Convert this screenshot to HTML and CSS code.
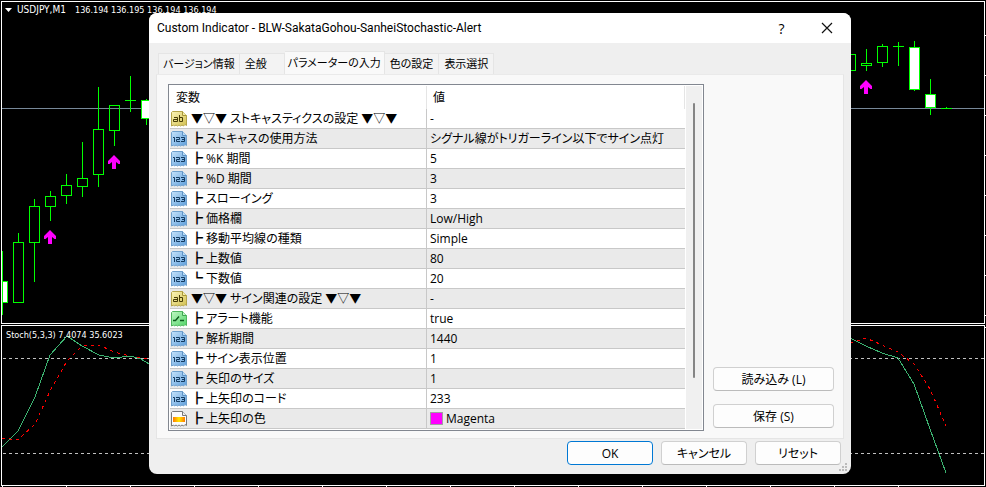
FILE: index.html
```html
<!DOCTYPE html>
<html lang="ja">
<head>
  <meta charset="UTF-8">
  <meta name="viewport" content="width=device-width, initial-scale=1.0">

  <title>Custom Indicator</title>

  <link rel="stylesheet" href="styles.css">
</head>
<body>

<!-- icons -->
<svg class="defs" width="0" height="0" aria-hidden="true">
  <defs>
    <linearGradient id="blue" x1="0" y1="0" x2="1" y2="1">
      <stop offset="0" stop-color="#c4e2fa"/>
      <stop offset="1" stop-color="#5f9fdc"/>
    </linearGradient>
    <linearGradient id="yellow" x1="0" y1="0" x2="1" y2="1">
      <stop offset="0" stop-color="#fbf5b8"/>
      <stop offset="1" stop-color="#d2bf50"/>
    </linearGradient>
    <linearGradient id="green" x1="0" y1="0" x2="1" y2="1">
      <stop offset="0" stop-color="#c0f8c4"/>
      <stop offset="1" stop-color="#52d468"/>
    </linearGradient>
    <linearGradient id="orange">
      <stop offset="0" stop-color="#ff7800"/>
      <stop offset=".5" stop-color="#ffe800"/>
      <stop offset="1" stop-color="#ff7800"/>
    </linearGradient>
    <path id="sheet" d="M1.5 .5H11.5L15.5 4.5V14.5L14 13.5L12.5 15L11 14L9.5 15L8 14L6.5 15L5 14L3.5 15L2.5 14L.5 15V1.5Z"/>
    <symbol id="icon-int" viewBox="0 0 16 16">
      <use href="#sheet" fill="url(#blue)" stroke="#6fa0cd"/>
      <path d="M11.5 .5V4.5H15.5" fill="#b9dcf8" stroke="#5f93c4"/>
      <path d="M2 6.5H3.5V11M5 6.500H8.500V8.500H5.500V10.500H9M10 6.500H13.500V10.500H10M11 8.500H13.500" fill="none" stroke="#123a60"/>
    </symbol>
    <symbol id="icon-str" viewBox="0 0 16 16">
      <use href="#sheet" fill="url(#yellow)" stroke="#b5a548"/>
      <path d="M11.5 .5V4.5H15.5" fill="#f5edaa" stroke="#a8973a"/>
      <path d="M3 6.500H6.500V10.500H2.500V8.500H6M8.500 4V10.500H11.500V6.500H9" fill="none" stroke="#453b06"/>
    </symbol>
    <symbol id="icon-bool" viewBox="0 0 16 16">
      <use href="#sheet" fill="url(#green)" stroke="#4fb65e"/>
      <path d="M11.5 .5V4.5H15.5" fill="#c2f7c8" stroke="#3fa650"/>
      <path d="M2 9.500H4.500L8 5.500M9 9.500H13" fill="none" stroke="#0c5a1c" stroke-width="1.400"/>
    </symbol>
    <symbol id="icon-color" viewBox="0 0 16 16">
      <use href="#sheet" fill="#fbfbfb" stroke="#777"/>
      <path d="M11.5 .5V4.5H15.5" fill="#eee" stroke="#777"/>
      <path d="M2 6H14V11H2Z" fill="url(#orange)"/>
    </symbol>
    <path id="arrow" d="M6 0L12 6V9H10.500L8 7V14H4V7L1.500 9H0V6Z"/>
  </defs>
</svg>

<main class="terminal">

  <svg class="chart" viewBox="0 0 986 487" role="img" aria-label="USDJPY,M1">
    <!-- frames -->
    <g class="frame">
      <path d="M1.5 323V1.500H984.500V323.500H1"/>
      <path d="M1.500 485V325.500H984.500V485.500H1"/>
      <path d="M984 35.500H986M984 75.500H986M984 115.500H986M984 155.500H986M984 195.500H986M984 235.500H986M984 275.500H986M984 315.500H986M984 327.500H986"/>
      <path d="M2.500 485V487M66.500 485V487M130.500 485V487M194.500 485V487M258.500 485V487M322.500 485V487M386.500 485V487M450.500 485V487M514.500 485V487M578.500 485V487M642.500 485V487M706.500 485V487M770.500 485V487M834.500 485V487M898.500 485V487"/>
    </g>
    <path class="price-line" d="M2 108.500H984"/>

    <!-- candles -->
    <g class="candle">
      <path d="M2.500 251V315M18.500 233V242M34.500 199V206M34.500 242V282M50.500 191V196M50.500 206V221M66.500 174V185M66.500 195V204M82.500 142V178M82.500 186V197M98.500 87V129M98.500 174V187M114.500 130V146M130.500 76V112M125 100.500H136M146.500 99V125"/>
      <path d="M13.500 242.500H23.500V302.500H13.500ZM29.500 206.500H39.500V242.500H29.500ZM45.500 196.500H55.500V206.500H45.500ZM61.500 185.500H71.500V195.500H61.500ZM77.500 178.500H87.500V186.500H77.500ZM93.500 129.500H103.500V174.500H93.500ZM109.500 105.500H119.500V130.500H109.500Z"/>
      <path d="M850.500 22V73M845.500 54.500H855.500V70.500H845.500ZM866.500 49V63M866.500 65V71M861.500 63.500H871.500V65.500H861.500ZM882.500 44V46M882.500 62V67M877.500 46.500H887.500V62.500H877.500ZM898.500 42V66M893 46.500H904M914.500 41V91M930.500 79V115M946.500 107V108M941 108.500H952"/>
      <path class="down" d="M2.500 281.500H7.500V302.500H2.500ZM141.500 100.500H151.500V118.500H141.500ZM909.500 47.500H919.500V89.500H909.500ZM925.500 94.500H935.500V107.500H925.500Z"/>
    </g>
    <g class="signal">
      <use href="#arrow" x="44" y="230"/>
      <use href="#arrow" x="108" y="155"/>
      <use href="#arrow" x="860" y="80"/>
    </g>

    <!-- stochastic -->
    <path class="level" d="M3 358.500H984M3 453.500H984"/>
    <polyline class="signal-line" points="2,438 18,440 35,424 51,389 67,361 82,346 99,345 114,352 130,356 149,359"/>
    <polyline class="signal-line" points="850,343 866,338 882,345 898,352 914,364 930,389 946,426"/>
    <polyline class="main-line" points="2,447 18,431 35,397 50,355 67,336 82,346 99,355 114,358 130,356 141,359 149,364"/>
    <polyline class="main-line" points="850,338 866,346 882,353 898,358 914,384 930,429 946,473"/>

    <path class="marker" d="M5 8H12L8.500 12Z"/>
    <text class="label symbol" x="17" y="13">USDJPY,M1</text>
    <text class="label" x="75" y="13">136.194 136.195 136.194 136.194</text>
    <text class="label" x="6" y="338">Stoch(5,3,3) 7.4074 35.6023</text>
  </svg>

  <section class="dialog" role="dialog" aria-labelledby="dialog-title">
    <header class="title-bar">
      <h1 class="title" id="dialog-title">Custom Indicator - BLW-SakataGohou-SanheiStochastic-Alert</h1>
      <button class="title-button help" type="button">?</button>
      <button class="title-button" type="button" aria-label="閉じる">
        <svg width="12" height="12" viewBox="0 0 12 12"><path d="M1 1L11 11M11 1L1 11" fill="none" stroke="#111" stroke-width="1.200"/></svg>
      </button>
    </header>

    <div class="content">
      <div class="tabs" role="tablist">
        <button class="tab" type="button" role="tab">バージョン情報</button>
        <button class="tab tab-short" type="button" role="tab">全般</button>
        <button class="tab active" type="button" role="tab" aria-selected="true">パラメーターの入力</button>
        <button class="tab" type="button" role="tab">色の設定</button>
        <button class="tab" type="button" role="tab">表示選択</button>
      </div>

      <div class="panel">
        <div class="list">
          <table class="params">
            <thead>
              <tr><th class="name">変数</th><th>値</th></tr>
            </thead>
            <tbody>
              <tr><td><svg class="icon"><use href="#icon-str"/></svg>▼▽▼ ストキャスティクスの設定 ▼▽▼</td><td>-</td></tr>
              <tr><td><svg class="icon"><use href="#icon-int"/></svg>┣ ストキャスの使用方法</td><td>シグナル線がトリガーライン以下でサイン点灯</td></tr>
              <tr><td><svg class="icon"><use href="#icon-int"/></svg>┣ %K 期間</td><td>5</td></tr>
              <tr><td><svg class="icon"><use href="#icon-int"/></svg>┣ %D 期間</td><td>3</td></tr>
              <tr><td><svg class="icon"><use href="#icon-int"/></svg>┣ スローイング</td><td>3</td></tr>
              <tr><td><svg class="icon"><use href="#icon-int"/></svg>┣ 価格欄</td><td>Low/High</td></tr>
              <tr><td><svg class="icon"><use href="#icon-int"/></svg>┣ 移動平均線の種類</td><td>Simple</td></tr>
              <tr><td><svg class="icon"><use href="#icon-int"/></svg>┣ 上数値</td><td>80</td></tr>
              <tr><td><svg class="icon"><use href="#icon-int"/></svg>┗ 下数値</td><td>20</td></tr>
              <tr><td><svg class="icon"><use href="#icon-str"/></svg>▼▽▼ サイン関連の設定 ▼▽▼</td><td>-</td></tr>
              <tr><td><svg class="icon"><use href="#icon-bool"/></svg>┣ アラート機能</td><td>true</td></tr>
              <tr><td><svg class="icon"><use href="#icon-int"/></svg>┣ 解析期間</td><td>1440</td></tr>
              <tr><td><svg class="icon"><use href="#icon-int"/></svg>┣ サイン表示位置</td><td>1</td></tr>
              <tr><td><svg class="icon"><use href="#icon-int"/></svg>┣ 矢印のサイズ</td><td>1</td></tr>
              <tr><td><svg class="icon"><use href="#icon-int"/></svg>┣ 上矢印のコード</td><td>233</td></tr>
              <tr><td><svg class="icon"><use href="#icon-color"/></svg>┣ 上矢印の色</td><td><span class="swatch"></span>Magenta</td></tr>
            </tbody>
          </table>
          <div class="scrollbar"><div class="thumb"></div></div>
        </div>

        <div class="side">
          <button class="button" type="button">読み込み (L)</button>
          <button class="button" type="button">保存 (S)</button>
        </div>
      </div>

      <footer class="actions">
        <button class="button default" type="button">OK</button>
        <button class="button" type="button">キャンセル</button>
        <button class="button" type="button">リセット</button>
      </footer>
    </div>

    <svg class="grip" width="9" height="9" viewBox="0 0 9 9" aria-hidden="true">
      <path d="M6 0H8V2H6ZM3 3H5V5H3ZM6 3H8V5H6ZM0 6H2V8H0ZM3 6H5V8H3ZM6 6H8V8H6Z" fill="#bbb"/>
    </svg>
  </section>

</main>

</body>
</html>
```

FILE: styles.css
```css
* {
  box-sizing: border-box;
}

body {
  margin: 0;
  background-color: #000;
  color: #000;
  font-family: "Open Sans", "Noto Sans CJK JP", sans-serif;
  font-size: 12px;
  font-feature-settings: "palt";
}

button {
  font: inherit;
  font-feature-settings: inherit;
  color: inherit;
}

.defs {
  position: absolute;
}

.terminal {
  position: relative;
  overflow: hidden;
}

/* chart */

.chart {
  display: block;
  width: 100%;
}

.frame,
.price-line,
.candle,
.level,
.main-line,
.signal-line {
  fill: none;
  shape-rendering: crispEdges;
}

.frame {
  stroke: #fff;
}

.price-line {
  stroke: #778899;
}

.candle {
  stroke: #00ff00;
}

.candle .down {
  fill: #fff;
}

.signal {
  fill: #ff00ff;
}

.level {
  stroke: #c0c0c0;
  stroke-dasharray: 3 3;
}

.main-line {
  stroke: #3cb371;
}

.signal-line {
  stroke: #ff0000;
  stroke-dasharray: 3 4;
}

.marker,
.label {
  fill: #fff;
}

.label {
  font-family: "DejaVu Sans Condensed", "DejaVu Sans", sans-serif;
  font-size: 9px;
}

.symbol {
  font-size: 10px;
}

/* dialog */

.dialog {
  position: absolute;
  top: 13px;
  left: 149px;
  right: 135px;
  overflow: hidden;
  border-radius: 8px;
  background-color: #efefef;
}

.title-bar {
  display: flex;
  align-items: center;
  height: 30px;
  padding: 0 2px 0 8px;
  background-color: #fff;
}

.title {
  flex: 1;
  margin: 0;
  font-family: Roboto, "Noto Sans CJK JP", sans-serif;
  font-size: 12px;
  font-weight: normal;
}

.title-button {
  display: flex;
  align-items: center;
  justify-content: center;
  width: 45px;
  height: 28px;
  padding: 0;
  border: 0;
  background: none;
}

.help {
  font-size: 14px;
}

.content {
  padding: 8px 7px 9px;
}

.tabs {
  display: flex;
  align-items: flex-end;
  padding-left: 2px;
}

.tab {
  height: 21px;
  padding: 0 5px;
  border: 1px solid #e5e5e5;
  border-width: 1px 1px 0 0;
  background-color: #f3f3f3;
  font-size: 11px;
  line-height: 20px;
  white-space: nowrap;
}

.tab:first-child {
  padding: 0 4px;
  border-left-width: 1px;
}

.tab-short {
  padding-right: 17px;
}

.tab.active {
  height: 23px;
  padding: 0 3px;
  background-color: #f9f9f9;
}

.panel {
  display: flex;
  gap: 9px;
  padding: 9px 9px 7px 11px;
  border: 1px solid #e5e5e5;
  border-top-color: #eaeaea;
  background-color: #f9f9f9;
}

.list {
  display: flex;
  flex: 1;
  gap: 1px;
  padding: 1px;
  border: 1px solid #828790;
  background-color: #fff;
}

.params {
  flex: 1;
  border-collapse: separate;
  border-spacing: 0;
  table-layout: fixed;
}

.params th,
.params td {
  overflow: hidden;
  padding: 0 3px;
  line-height: 19px;
  text-align: left;
  white-space: nowrap;
}

.params th {
  height: 23px;
  padding: 0 6px;
  border-right: 1px solid #e5e5e5;
  font-weight: normal;
}

.params .name {
  width: 257px;
}

.params td {
  height: 20px;
  border-bottom: 1px solid #c8c8c8;
}

.params td:first-child {
  padding-left: 1px;
  border-right: 1px solid #c8c8c8;
}

.params tbody tr:nth-child(even) {
  background-color: #eaeaea;
}

.icon {
  width: 16px;
  height: 16px;
  margin: 2px 4px 0 0;
  vertical-align: top;
}

.swatch {
  display: inline-block;
  width: 13px;
  height: 13px;
  margin: 3px 3px 0 0;
  border: 1px solid #a0a0a0;
  background-color: #ff00ff;
  vertical-align: top;
}

.scrollbar {
  width: 16px;
  padding: 17px 7px 51px;
  background-color: #f0f0f0;
}

.thumb {
  width: 2px;
  height: 100%;
  border-radius: 1px;
  background-color: #858585;
}

.side {
  display: flex;
  flex-direction: column;
  justify-content: flex-end;
  gap: 13px;
  width: 121px;
  padding-bottom: 3px;
}

.button {
  height: 24px;
  padding: 0;
  border: 1px solid #d0d0d0;
  border-bottom-color: #bbb;
  border-radius: 4px;
  background-color: #fdfdfd;
}

.default {
  border-color: #0078d4;
}

.actions {
  display: flex;
  justify-content: flex-end;
  gap: 8px;
  padding: 2px 3px 0 0;
}

.actions .button {
  width: 86px;
}

.grip {
  position: absolute;
  right: 3px;
  bottom: 2px;
}
```
